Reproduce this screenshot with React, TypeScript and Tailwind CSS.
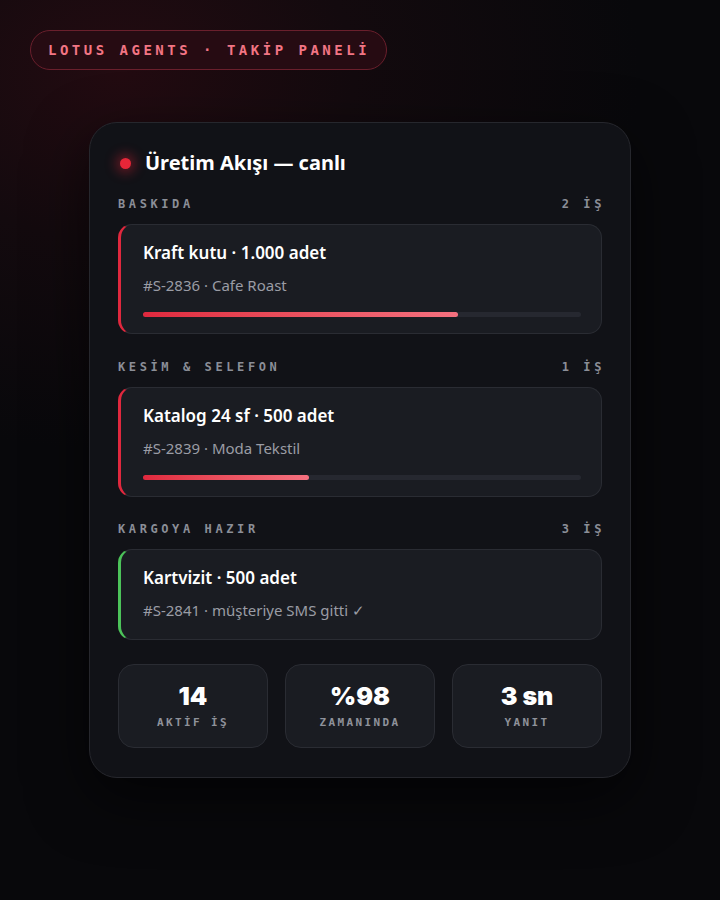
const sans = "font-['Noto_Sans','Open_Sans',sans-serif]";
const mono = "font-['DejaVu_Sans_Mono','Liberation_Mono',monospace]";

type Job = {
  title: string;
  meta: string;
  accent: 'red' | 'green';
  progress?: number;
};

type Stage = { name: string; count: string; job: Job };

const stages: Stage[] = [
  {
    name: 'BASKIDA',
    count: '2 İŞ',
    job: { title: 'Kraft kutu · 1.000 adet', meta: '#S-2836 · Cafe Roast', accent: 'red', progress: 72 },
  },
  {
    name: 'KESİM & SELEFON',
    count: '1 İŞ',
    job: { title: 'Katalog 24 sf · 500 adet', meta: '#S-2839 · Moda Tekstil', accent: 'red', progress: 38 },
  },
  {
    name: 'KARGOYA HAZIR',
    count: '3 İŞ',
    job: { title: 'Kartvizit · 500 adet', meta: '#S-2841 · müşteriye SMS gitti ✓', accent: 'green' },
  },
];

const stats = [
  { value: '14', label: 'AKTİF İŞ' },
  { value: '%98', label: 'ZAMANINDA' },
  { value: '3 sn', label: 'YANIT' },
];

function JobCard({ job }: { job: Job }) {
  return (
    <div
      className={`rounded-[14px] border border-[#2a2c33] bg-[#1a1c22] pl-[22px] pr-5 pt-4 border-l-[3px] ${
        job.accent === 'red' ? 'border-l-[#e0283e] pb-4' : 'border-l-[#4cc35a] pb-[19px]'
      }`}
    >
      <div className="text-[17px] font-semibold leading-6 text-white">{job.title}</div>
      <div className="mt-[10px] text-[15px] leading-5 text-[#9a9ca5]">{job.meta}</div>
      {job.progress !== undefined && (
        <div className="mt-[17px] h-[5px] w-full rounded-full bg-[#262830]">
          <div
            className="h-full rounded-full bg-gradient-to-r from-[#e0283e] to-[#f4707f]"
            style={{ width: `${job.progress}%` }}
          />
        </div>
      )}
    </div>
  );
}

export default function App() {
  return (
    <div
      className={`${sans} relative min-h-[900px] w-full overflow-hidden bg-[#08080b] bg-[radial-gradient(ellipse_520px_380px_at_120px_70px,#230b11_0%,#130a0e_45%,#08080b_100%)]`}
    >
      <div className="px-[30px] pt-[30px]">
        <div
          className={`${mono} inline-flex h-10 items-center rounded-full border border-[#6a1f2c] bg-[#260b12] pl-[17px] pr-[16px] text-[14px] font-bold tracking-[3.5px] text-[#f27584]`}
        >
          LOTUS AGENTS · TAKİP PANELİ
        </div>
      </div>

      <div className="mx-auto mt-[52px] w-[542px] rounded-[28px] border border-[#26272d] bg-[#111217] px-[28px] pb-[29px] pt-[26px] shadow-[0_20px_60px_rgba(0,0,0,0.6)]">
        <div className="flex items-center gap-[14px] pl-[1px]">
          <span className="ml-[1px] h-[11px] w-[11px] rounded-full bg-[#e62638] shadow-[0_0_12px_4px_rgba(230,38,56,0.4)]" />
          <span className="text-[20px] font-bold leading-7 text-white">Üretim Akışı — canlı</span>
        </div>

        {stages.map((stage, i) => (
          <div key={stage.name} className={i === 0 ? 'mt-[19px]' : i === 1 ? 'mt-[25px]' : 'mt-6'}>
            <div
              className={`${mono} mb-3 flex items-center justify-between text-[12px] font-bold leading-4 tracking-[3.6px] text-[#8b8e97]`}
            >
              <span>{stage.name}</span>
              <span className="-mr-[3px]">{stage.count}</span>
            </div>
            <JobCard job={stage.job} />
          </div>
        ))}

        <div className="mt-6 grid grid-cols-3 gap-[17px]">
          {stats.map((s) => (
            <div
              key={s.label}
              className="flex h-[84px] flex-col items-center justify-center rounded-[16px] border border-[#2a2c33] bg-[#1a1c22]"
            >
              <div className="font-['Inter',sans-serif] text-[25px] font-black leading-[30px] text-white">{s.value}</div>
              <div className={`${mono} mt-[4px] text-[11px] font-bold leading-4 tracking-[2.4px] text-[#8f929b]`}>
                {s.label}
              </div>
            </div>
          ))}
        </div>
      </div>
    </div>
  );
}
